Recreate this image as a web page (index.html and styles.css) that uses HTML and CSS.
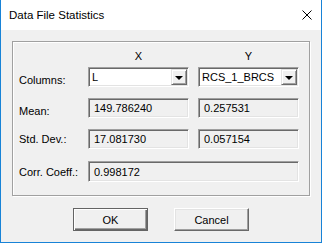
FILE: index.html
```html
<!DOCTYPE html>
<html lang="en">
<head>
    <meta charset="UTF-8">
    <link rel="stylesheet" href="styles.css">
    <title>Data File Statistics</title>
</head>
<body>
    <div class="window">
        <div class="titlebar">
            <span class="title">Data File Statistics</span>
            <svg class="close" width="10" height="10" viewBox="0 0 10 10">
                <path d="M0.5 0.5 L9.5 9.5 M9.5 0.5 L0.5 9.5" stroke="#000" stroke-width="1"/>
            </svg>
        </div>
        <div class="client">
            <div class="group">
                <div class="row head">
                    <span class="label"></span>
                    <span class="col-head">X</span>
                    <span class="col-head">Y</span>
                </div>
                <div class="row first">
                    <span class="label low">Columns:</span>
                    <div class="combo">
                        <span class="combo-text">L</span>
                        <span class="drop"><i class="arrow"></i></span>
                    </div>
                    <div class="combo">
                        <span class="combo-text">RCS_1_BRCS</span>
                        <span class="drop"><i class="arrow"></i></span>
                    </div>
                </div>
                <div class="row">
                    <span class="label low">Mean:</span>
                    <div class="field">149.786240</div>
                    <div class="field">0.257531</div>
                </div>
                <div class="row">
                    <span class="label">Std. Dev.:</span>
                    <div class="field">17.081730</div>
                    <div class="field">0.057154</div>
                </div>
                <div class="row last">
                    <span class="label">Corr. Coeff.:</span>
                    <div class="field wide">0.998172</div>
                </div>
            </div>
            <div class="buttons">
                <button class="btn default">OK</button>
                <button class="btn">Cancel</button>
            </div>
        </div>
    </div>
</body>
</html>
```
FILE: styles.css
```css
body {
    margin: 0;
    font-family: "Liberation Sans", Arial, sans-serif;
    font-size: 11px;
    color: #000;
}

.window {
    width: 322px;
    height: 243px;
    box-sizing: border-box;
    border: 1px solid #1883d7;
    border-top: none;
    background: #f0f0f0;
    display: flex;
    flex-direction: column;
}

.titlebar {
    height: 30px;
    background: #fff;
    display: flex;
    align-items: center;
    justify-content: space-between;
    padding: 0 9px 0 8px;
}

.title {
    font-size: 11.5px;
}

.close {
    display: block;
}

.client {
    flex: 1;
}

/* etched group box */
.group {
    margin: 11px 11px 0 11px;
    height: 155px;
    box-sizing: border-box;
    border: 1px solid #a0a0a0;
    box-shadow: inset 1px 1px #fff, 1px 1px #fff;
    padding: 7px 0 0 6px;
    display: flex;
    flex-direction: column;
}

.row {
    display: flex;
    align-items: center;
    height: 20px;
    margin-top: 11px;
    column-gap: 9px;
}

.row.head {
    height: 14px;
    margin-top: 0;
}

.row.first {
    margin-top: 4px;
}

.row.last {
    margin-top: 12px;
    height: 21px;
}

.label {
    width: 69px;
    margin-right: -9px;
    white-space: nowrap;
}

.label.low {
    padding-top: 6px;
}

.col-head {
    width: 101px;
    text-align: center;
    line-height: 14px;
}

.combo,
.field {
    width: 101px;
    height: 100%;
    box-sizing: border-box;
    border: 1px solid;
    border-color: #a0a0a0 #fff #fff #a0a0a0;
    box-shadow: inset 1px 1px #696969, inset -1px -1px #e3e3e3;
    display: flex;
    align-items: center;
}

.combo {
    background: #fff;
    padding: 0 1px 0 3px;
    justify-content: space-between;
}

.field {
    padding-left: 5px;
}

.field.wide {
    width: 211px;
}

.drop {
    width: 16px;
    height: 16px;
    box-sizing: border-box;
    background: #f0f0f0;
    border: 1px solid;
    border-color: #e3e3e3 #696969 #696969 #e3e3e3;
    box-shadow: inset 1px 1px #fff, inset -1px -1px #a0a0a0;
    display: flex;
    align-items: center;
    justify-content: center;
}

.arrow {
    width: 0;
    height: 0;
    border-left: 4px solid transparent;
    border-right: 4px solid transparent;
    border-top: 4px solid #000;
    margin-top: 1px;
}

.buttons {
    display: flex;
    justify-content: center;
    gap: 26px;
    margin-top: 12px;
}

.btn {
    width: 75px;
    height: 23px;
    box-sizing: border-box;
    font-family: inherit;
    font-size: 11px;
    color: #000;
    background: #f0f0f0;
    border: 1px solid;
    border-color: #fff #696969 #696969 #fff;
    box-shadow: inset -1px -1px #a0a0a0, inset 1px 1px #e3e3e3;
    padding: 0;
}

.btn.default {
    border-color: #646464;
    box-shadow: inset 1px 1px #fff, inset -1px -1px #696969, inset -2px -2px #a0a0a0;
}
```
